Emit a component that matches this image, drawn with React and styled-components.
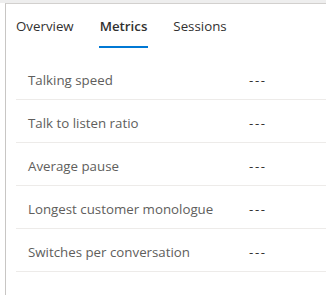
import styled, { createGlobalStyle } from "styled-components"

const GlobalStyle = createGlobalStyle`
    html, body {
        margin: 0;
        padding: 0;
        background: #ffffff;
    }
    body {
        font-family: "Segoe UI", "Open Sans", "Noto Sans", sans-serif;
        -webkit-font-smoothing: antialiased;
    }
`;

const Page = styled.div`
    height: 295px;
    box-sizing: border-box;
    padding-top: 3px;
    background: linear-gradient(#eeeeee, #eeeeee) top / 100% 3px no-repeat, #ffffff;
    overflow: hidden;
`;

const Panel = styled.div`
    margin-left: 5px;
    height: 100%;
    box-sizing: border-box;
    border-left: 1px solid #c8c6c4;
    border-top: 1px solid #d2d0ce;
    padding: 0 0 0 10px;
`;

const TabList = styled.div`
    display: flex;
    gap: 26px;
    align-items: flex-start;
    padding-top: 12px;
`;

const Tab = styled.div`
    position: relative;
    font-size: 13.3px;
    line-height: 20px;
    color: #323130;
    font-weight: ${p => (p.$active ? 600 : 400)};
    padding-bottom: 12px;

    &::after {
        content: "";
        display: ${p => (p.$active ? "block" : "none")};
        position: absolute;
        left: -1px;
        right: -1px;
        bottom: 0;
        height: 2px;
        background: #0078d4;
    }
`;

const Table = styled.div`
    margin-top: 9px;
`;

const Row = styled.div`
    display: grid;
    grid-template-columns: 221px 1fr;
    height: 43px;
    align-items: center;
    border-bottom: 1px solid #edebe9;
    box-sizing: border-box;
    padding: 3px 0 0 12px;
    font-size: 13.3px;
`;

const Label = styled.span`
    color: #605e5c;
`;

const Value = styled.span`
    color: #323130;
    letter-spacing: 1.6px;
`;

const metrics = [
    "Talking speed",
    "Talk to listen ratio",
    "Average pause",
    "Longest customer monologue",
    "Switches per conversation",
];

export default function App() {
    return (
        <>
            <GlobalStyle />
            <Page>
                <Panel>
                    <TabList>
                        <Tab>Overview</Tab>
                        <Tab $active>Metrics</Tab>
                        <Tab>Sessions</Tab>
                    </TabList>
                    <Table>
                        {metrics.map(name => (
                            <Row key={name}>
                                <Label>{name}</Label>
                                <Value>---</Value>
                            </Row>
                        ))}
                    </Table>
                </Panel>
            </Page>
        </>
    )
}
